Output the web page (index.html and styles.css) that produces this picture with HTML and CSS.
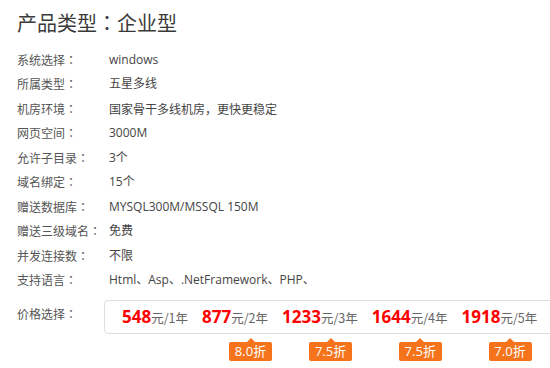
FILE: index.html
```html
<!DOCTYPE html>
<html lang="zh-CN">
<head>
<meta charset="utf-8">
<title>产品类型：企业型</title>
<link rel="stylesheet" href="styles.css">
</head>
<body>
<div class="page">
  <h1 class="title">产品类型<span class="colon" lang="ja">：</span>企业型</h1>
  <ul class="specs">
    <li class="row"><span class="label">系统选择<span class="colon" lang="ja">：</span></span><span class="value">windows</span></li>
    <li class="row"><span class="label">所属类型<span class="colon" lang="ja">：</span></span><span class="value">五星多线</span></li>
    <li class="row"><span class="label">机房环境<span class="colon" lang="ja">：</span></span><span class="value">国家骨干多线机房<span class="colon" lang="ja">，</span>更快更稳定</span></li>
    <li class="row"><span class="label">网页空间<span class="colon" lang="ja">：</span></span><span class="value">3000M</span></li>
    <li class="row"><span class="label">允许子目录<span class="colon" lang="ja">：</span></span><span class="value">3个</span></li>
    <li class="row"><span class="label">域名绑定<span class="colon" lang="ja">：</span></span><span class="value">15个</span></li>
    <li class="row"><span class="label">赠送数据库<span class="colon" lang="ja">：</span></span><span class="value">MYSQL300M/MSSQL 150M</span></li>
    <li class="row"><span class="label">赠送三级域名<span class="colon" lang="ja">：</span></span><span class="value">免费</span></li>
    <li class="row"><span class="label">并发连接数<span class="colon" lang="ja">：</span></span><span class="value">不限</span></li>
    <li class="row"><span class="label">支持语言<span class="colon" lang="ja">：</span></span><span class="value">Html、Asp、.NetFramework、PHP、</span></li>
  </ul>
  <div class="price-row">
    <span class="label price-label">价格选择<span class="colon" lang="ja">：</span></span>
    <div class="price-box">
      <div class="price-item"><span class="num">548</span><span class="unit">元/1年</span></div>
      <div class="price-item"><span class="num">877</span><span class="unit">元/2年</span><span class="badge">8.0折</span></div>
      <div class="price-item"><span class="num">1233</span><span class="unit">元/3年</span><span class="badge">7.5折</span></div>
      <div class="price-item"><span class="num">1644</span><span class="unit">元/4年</span><span class="badge">7.5折</span></div>
      <div class="price-item"><span class="num">1918</span><span class="unit">元/5年</span><span class="badge">7.0折</span></div>
    </div>
  </div>
</div>
</body>
</html>
```

FILE: styles.css
```css
html, body {
  margin: 0;
  padding: 0;
  background: #fff;
}
body {
  font-family: "Open Sans", "Noto Sans CJK SC", sans-serif;
  color: #333;
}
.page {
  width: 550px;
  height: 368px;
  box-sizing: border-box;
  overflow: hidden;
  padding: 8px 0 0 17px;
}
.title {
  margin: 0;
  font-family: "Noto Sans CJK SC", sans-serif;
  font-size: 20px;
  font-weight: normal;
  line-height: 30px;
  color: #3a3a3a;
}
.colon {
  font-family: "Noto Sans CJK JP", sans-serif;
}
.specs {
  list-style: none;
  margin: 10px 0 0;
  padding: 0;
}
.row {
  display: flex;
  height: 24.45px;
  line-height: 24.45px;
  font-size: 12px;
}
.label {
  width: 92px;
  flex-shrink: 0;
  color: #555;
  font-family: "Noto Sans CJK SC", sans-serif;
  font-size: 12px;
}
.value {
  color: #444;
}
.price-row {
  display: flex;
  margin-top: 8px;
}
.price-label {
  width: 87px;
  line-height: 24px;
  padding-top: 2px;
}
.price-box {
  flex-shrink: 0;
  width: 470px;
  height: 32px;
  border: 1px solid #dedede;
  border-radius: 4px;
  display: flex;
  gap: 14px;
  padding-left: 17px;
  box-sizing: content-box;
}
.price-item {
  position: relative;
  line-height: 32px;
  white-space: nowrap;
}
.num {
  color: #f00;
  font-weight: bold;
  font-size: 17px;
}
.unit {
  color: #666;
  font-size: 12.5px;
  font-family: "Noto Sans CJK SC", sans-serif;
}
.badge {
  position: absolute;
  top: calc(100% + 9px);
  left: 27px;
  width: 43px;
  height: 19px;
  line-height: 19px;
  text-align: center;
  background: #f5731b;
  color: #fff;
  font-size: 13px;
  border-radius: 2px;
  font-family: "Open Sans", "Noto Sans CJK SC", sans-serif;
}
.badge::before {
  content: "";
  position: absolute;
  left: 50%;
  top: -4px;
  margin-left: -4px;
  border-left: 4px solid transparent;
  border-right: 4px solid transparent;
  border-bottom: 4px solid #f5731b;
}
```
